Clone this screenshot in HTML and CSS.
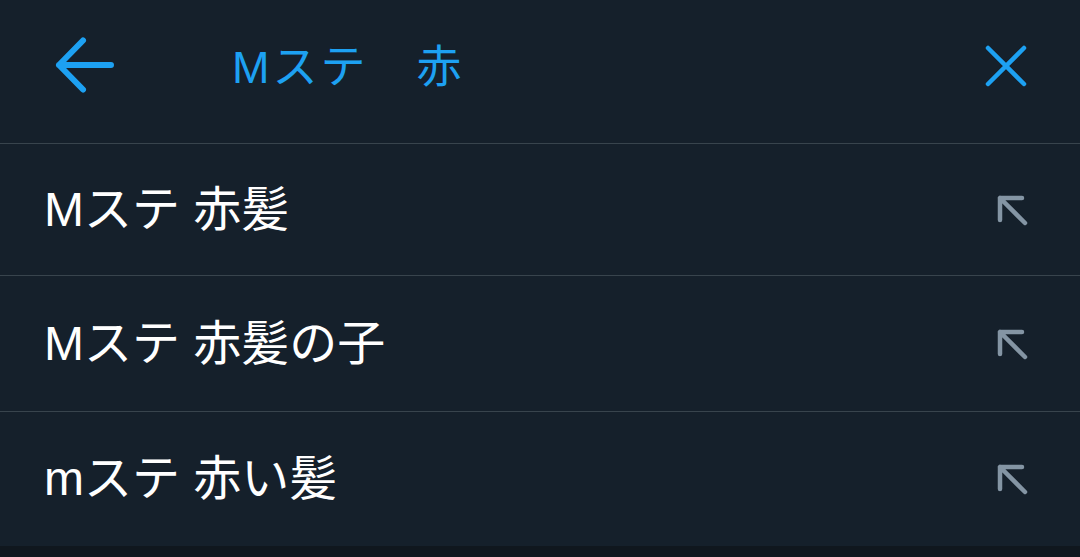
FILE: index.html
```html
<!DOCTYPE html>
<html lang="ja">
<head>
<meta charset="utf-8">
<link rel="stylesheet" href="styles.css">
</head>
<body>
<div class="screen">
  <header class="top">
    <span class="back">
      <svg width="60" height="60" viewBox="0 0 60 60"><path d="M57 30H5M29 5.5L5 30l24 24.5" fill="none" stroke="#1da1f2" stroke-width="6" stroke-linecap="round" stroke-linejoin="round"/></svg>
    </span>
    <span class="query">Mステ　赤</span>
    <span class="close">
      <svg width="44" height="44" viewBox="0 0 44 44"><path d="M4 4L40 40M40 4L4 40" fill="none" stroke="#1da1f2" stroke-width="4.5" stroke-linecap="round"/></svg>
    </span>
  </header>
  <ul class="list">
    <li class="row r1"><span class="txt">Mステ 赤髪</span><svg class="fill" width="34" height="34" viewBox="0 0 34 34"><path d="M5 5H27M5 5V27M5 5L30 30" fill="none" stroke="#8495a4" stroke-width="4.5" stroke-linecap="round"/></svg></li>
    <li class="row r2"><span class="txt">Mステ 赤髪の子</span><svg class="fill" width="34" height="34" viewBox="0 0 34 34"><path d="M5 5H27M5 5V27M5 5L30 30" fill="none" stroke="#8495a4" stroke-width="4.5" stroke-linecap="round"/></svg></li>
    <li class="row r3"><span class="txt">mステ 赤い髪</span><svg class="fill" width="34" height="34" viewBox="0 0 34 34"><path d="M5 5H27M5 5V27M5 5L30 30" fill="none" stroke="#8495a4" stroke-width="4.5" stroke-linecap="round"/></svg></li>
  </ul>
  <div class="bottom"></div>
</div>
</body>
</html>
```

FILE: styles.css
```css
* { box-sizing: border-box; margin: 0; padding: 0; }
html, body { width: 1080px; height: 557px; overflow: hidden; }
body {
  background: #15202b;
  font-family: "Liberation Sans", "Noto Sans CJK JP", sans-serif;
}
.screen { display: flex; flex-direction: column; height: 557px; }
.top {
  height: 144px;
  border-bottom: 1px solid #38444d;
  display: flex;
  align-items: center;
  padding: 0 0 8px 54px;
}
.back { display: flex; width: 60px; height: 60px; margin-bottom: 6px; }
.query {
  margin-left: 118px;
  color: #1da1f2;
  font-size: 45px;
  line-height: 1;
  letter-spacing: 3px;
  flex: 1;
}
.close { display: flex; width: 44px; height: 44px; margin-right: 52px; margin-bottom: 4px; }
.list { list-style: none; }
.row {
  display: flex;
  align-items: center;
  justify-content: space-between;
  border-bottom: 1px solid #38444d;
  padding: 0 51px 0 44px;
  color: #ffffff;
  font-size: 48px;
}
.r1 { height: 132px; }
.r2 { height: 136px; }
.r3 { height: 134px; border-bottom: none; }
.txt { line-height: 1; }
.bottom { flex: 1; background: #10171e; }
```
